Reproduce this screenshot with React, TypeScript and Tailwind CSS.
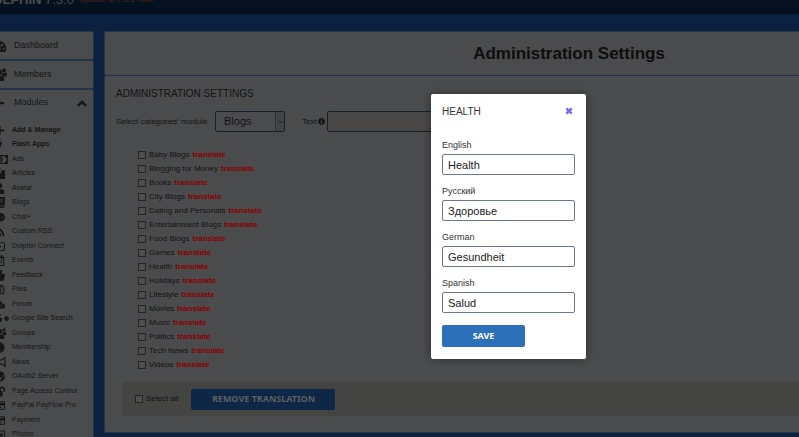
import { useState } from "react";
import type { ComponentType } from "react";
import {
  FaCertificate,
  FaCommentDots,
  FaComments,
  FaGlobeAmericas,
  FaInfoCircle,
  FaLockOpen,
  FaPlus,
  FaRegCalendarAlt,
  FaRegCreditCard,
  FaRegImage,
  FaRegSave,
  FaRss,
  FaThumbsUp,
  FaUser,
} from "react-icons/fa";

interface IconProps {
  className?: string
}

interface ModuleLink {
  label: string
  icon: ComponentType<IconProps>
  bold?: boolean
}

function DashboardIcon({ className }: IconProps) {
  return (
    <svg viewBox="0 0 16 13" className={className} fill="currentColor">
      <path
        fillRule="evenodd"
        d="M8 1a8 8 0 0 0-6.8 12h13.600A8 8 0 0 0 8 1zM3 8a1.100 1.100 0 1 0 0 2.200A1.100 1.100 0 0 0 3 8zm1.500-3.600a1.100 1.100 0 1 0 0 2.200 1.100 1.100 0 0 0 0-2.200zM8 2.600a1.100 1.100 0 1 0 0 2.200 1.100 1.100 0 0 0 0-2.200zm3.500 1.800a1.100 1.100 0 1 0 0 2.200 1.100 1.100 0 0 0 0-2.200zM13 8a1.100 1.100 0 1 0 0 2.200A1.100 1.100 0 0 0 13 8zM9.200 5.500L8 8.500a1.600 1.600 0 1 0 1 .3l1-3z"
      />
    </svg>
  )
}

function GroupIcon({ className }: IconProps) {
  return (
    <svg viewBox="0 0 16 13" className={className} fill="currentColor">
      <circle cx="3" cy="2.200" r="2" />
      <circle cx="13" cy="2.200" r="2" />
      <circle cx="8" cy="4.200" r="3" />
      <path d="M0 7.500C0 5.500.4 4.300 1.400 4.300c.8.700 2 .7 3 .3C4.400 6 5 6.800 5.500 7.300 4 7.300 3.300 8 2.800 8.600H1C.4 8.600 0 8.200 0 7.500zM16 7.500c0-2-.4-3.200-1.400-3.200-.8.700-2 .7-3 .3 0 1.400-.6 2.200-1.100 2.700 1.500 0 2.200.7 2.700 1.300H15c.6 0 1-.4 1-1.100z" />
      <path d="M5.200 7.300c1.700 1.300 3.900 1.300 5.600 0 1.700 0 2.500 1.800 2.500 3.900 0 1.200-.7 1.800-1.800 1.800h-7c-1.100 0-1.800-.6-1.800-1.800 0-2.100.8-3.900 2.500-3.900z" />
    </svg>
  )
}

function MoneyIcon({ className }: IconProps) {
  return (
    <svg viewBox="0 0 16 11" className={className} fill="currentColor">
      <path
        fillRule="evenodd"
        d="M0 1h16v9H0zM3.200 2.200a2 2 0 0 1-2 2v2.600a2 2 0 0 1 2 2h9.600a2 2 0 0 1 2-2V4.200a2 2 0 0 1-2-2z"
      />
      <path fillRule="evenodd" d="M8 2.500c1.700 0 2.700 1.300 2.700 3s-1 3-2.700 3-2.700-1.300-2.700-3 1-3 2.700-3zM7 4.300v.8h.5v1.800H7v.6h2v-.6h-.5V3.800H8z" />
    </svg>
  )
}

function ArticlesIcon({ className }: IconProps) {
  return (
    <svg viewBox="0 0 12 12" className={className} fill="currentColor">
      <path d="M4 0h3v2L4.500 4.500V10H0V3h3.500z" />
      <path d="M8 2.500h4V12H5.300V5.500h2.700z" />
    </svg>
  )
}

function BookIcon({ className }: IconProps) {
  return (
    <svg viewBox="0 0 13 12" className={className} fill="currentColor">
      <path
        fillRule="evenodd"
        d="M4 0h8c.8 0 1.200.6 1 1.300l-2.300 8.200H3c-.7 0-.9.500-.6 1h8.400l1.500-5.500.7.500-1.700 5.700c-.1.500-.5.800-1 .8H2.500C1 12 0 10.800.3 9.500L2.600 1.200C2.800.5 3.300 0 4 0zm.7 2.700l-.2.800h5.200l.2-.8zM4.200 4.600l-.2.800h5.200l.2-.8z"
      />
    </svg>
  )
}

function SignInIcon({ className }: IconProps) {
  return (
    <svg viewBox="0 0 12 12" className={className} fill="currentColor">
      <path d="M0 4.500h3.500V2L8 6l-4.500 4V7.500H0z" />
      <path d="M7 1h2.500A2.500 2.500 0 0 1 12 3.500v5A2.500 2.500 0 0 1 9.500 11H7V9.800h2.300c.8 0 1.500-.6 1.500-1.400V3.600c0-.8-.7-1.400-1.500-1.400H7z" />
    </svg>
  )
}

function GooglePlusIcon({ className }: IconProps) {
  return (
    <svg viewBox="0 0 18 11" className={className} fill="none" stroke="currentColor" strokeWidth="2">
      <path d="M9.300 2.800A4.300 4.300 0 1 0 10.200 6H6M13 5.500h5M15.500 3v5" />
    </svg>
  )
}

function HornIcon({ className }: IconProps) {
  return (
    <svg viewBox="0 0 14 12" className={className} fill="none" stroke="currentColor" strokeWidth="1.300">
      <path d="M1 4h4.500C8.500 4 11 2.500 13 .8v9.400C11 8.500 8.500 7 5.500 7H1zM3 7l1 4.300h2L5.300 7" />
    </svg>
  )
}

function BoltIcon({ className }: IconProps) {
  return (
    <svg viewBox="0 0 6 12" className={className} fill="currentColor">
      <path d="M1.500 0h2.700L2.800 3.700 6 3 2 12l1-6.200L0 6.600z" />
    </svg>
  )
}

const modules: ModuleLink[] = [
  { label: "Add & Manage", icon: FaPlus, bold: true },
  { label: "Flash Apps", icon: BoltIcon, bold: true },
  { label: "Ads", icon: MoneyIcon },
  { label: "Articles", icon: ArticlesIcon },
  { label: "Avatar", icon: FaUser },
  { label: "Blogs", icon: BookIcon },
  { label: "Chat+", icon: FaCommentDots },
  { label: "Custom RSS", icon: FaRss },
  { label: "Dolphin Connect", icon: SignInIcon },
  { label: "Events", icon: FaRegCalendarAlt },
  { label: "Feedback", icon: FaThumbsUp },
  { label: "Files", icon: FaRegSave },
  { label: "Forum", icon: FaComments },
  { label: "Google Site Search", icon: GooglePlusIcon },
  { label: "Groups", icon: GroupIcon },
  { label: "Membership", icon: FaCertificate },
  { label: "News", icon: HornIcon },
  { label: "OAuth2 Server", icon: FaGlobeAmericas },
  { label: "Page Access Control", icon: FaLockOpen },
  { label: "PayPal PayFlow Pro", icon: FaRegCreditCard },
  { label: "Payment", icon: FaRegCreditCard },
  { label: "Photos", icon: FaRegImage },
];

const categories = [
  "Baby Blogs",
  "Blogging for Money",
  "Books",
  "City Blogs",
  "Dating and Personals",
  "Entertainment Blogs",
  "Food Blogs",
  "Games",
  "Health",
  "Holidays",
  "Lifestyle",
  "Movies",
  "Music",
  "Politics",
  "Tech News",
  "Videos",
];

const translations = [
  { lang: "English", value: "Health" },
  { lang: "Русский", value: "Здоровье" },
  { lang: "German", value: "Gesundheit" },
  { lang: "Spanish", value: "Salud" },
];

const card = "rounded-[2px] border border-[#24344a] bg-[#4a4b4c]";
const checkbox = "size-2 shrink-0 appearance-none border border-[#262626] bg-[#4d4d4d] checked:bg-[#12345c]";

function Header() {
  return (
    <header className="flex h-[14px] items-end gap-[6px] border-b border-[#040b14] bg-[#06111f] pb-2">
      <div className="-ml-[17px] text-[13px] leading-[10px] text-[#4c4c4c]">
        <b>DOLPHIN</b> 7.3.0
      </div>
      <a href="#update" className="text-[8px] leading-[10px] text-[#4a2414]">
        Update to 7.3.1 now!
      </a>
    </header>
  )
}

function Sidebar() {
  return (
    <nav className="-ml-[10px] w-[104px] shrink-0 text-[9px] text-[#161616]">
      <a href="#dashboard" className={`${card} flex h-[29px] items-center gap-[7px]`}>
        <DashboardIcon className="h-3 w-4" />
        Dashboard
      </a>
      <a href="#members" className={`${card} flex h-[29px] items-center gap-[7px]`}>
        <GroupIcon className="h-[13px] w-4" />
        Members
      </a>
      <div className={card}>
        <button type="button" className="flex h-[26px] w-full items-center gap-[7px] pr-[6px]">
          <span className="flex w-4 justify-center">
            <FaPlus className="size-3" />
          </span>
          Modules
          <svg viewBox="0 0 10 7" className="ml-auto h-[7px] w-[10px]" fill="none" stroke="currentColor" strokeWidth="2.400">
            <path d="M1 5.800L5 1.800l4 4" />
          </svg>
        </button>
        <ul className="pt-[7px] text-[7px]">
          {modules.map(({ label, icon: Icon, bold }) => (
            <li key={label} className="odd:h-[14px] even:h-[15px]">
              <a href="#module" className={`flex h-full items-center gap-1 whitespace-nowrap ${bold ? "font-bold" : ""}`}>
                <span className="flex w-[17px] shrink-0 justify-center">
                  <Icon className="h-[11px] w-auto shrink-0" />
                </span>
                {label}
              </a>
            </li>
          ))}
        </ul>
      </div>
    </nav>
  )
}

function SettingsPanel() {
  return (
    <main className="-mr-[235px] min-w-0 flex-1 text-[8px] text-[#141414]">
      <h1 className={`${card} flex h-[45px] items-center justify-center text-[17px] font-bold text-[#0e0e0e]`}>
        Administration Settings
      </h1>
      <section className={`${card} -mt-px px-[11px] pt-[11px] pb-4`}>
        <h2 className="text-[10px] leading-[14px]">ADMINISTRATION SETTINGS</h2>

        <div className="mt-[10px] flex items-center">
          <label htmlFor="module" className="w-[99px]">Select categories' module</label>
          <div className="relative w-[70px]">
            <select
              id="module"
              className="block h-[21px] w-full appearance-none rounded-[2px] border border-[#16202c] bg-[#4a4b4c] pl-2 text-[11px]"
            >
              <option>Blogs</option>
            </select>
            <span className="pointer-events-none absolute inset-y-px right-px flex w-[9px] items-center justify-center border-l border-[#2c3138] bg-[#434445]">
              <svg viewBox="0 0 6 4" className="h-1 w-[5px]" fill="none" stroke="currentColor">
                <path d="M1 1l2 2 2-2" />
              </svg>
            </span>
          </div>
          <label htmlFor="text" className="ml-[17px] flex items-center gap-px">
            Text <FaInfoCircle className="size-[7px]" />
          </label>
          <input
            id="text"
            className="ml-[2px] h-[21px] w-[150px] rounded-[2px] border border-[#16202c] bg-[#4a4846] px-[5px] text-[11px]"
          />
        </div>

        <ul className="mt-4 pl-[22px]">
          {categories.map((name) => (
            <li key={name} className="flex h-[14px] items-center">
              <label className="flex items-center gap-[3px]">
                <input type="checkbox" className={checkbox} />
                {name}
              </label>
              <a href="#translate" className="ml-[3px] font-bold text-[#8a0000]">translate</a>
            </li>
          ))}
        </ul>

        <div className="mt-[10px] ml-[6px] flex h-[34px] items-center gap-[13px] bg-[#444443] pl-[13px]">
          <label className="flex items-center gap-[3px]">
            <input type="checkbox" className={checkbox} />
            Select all
          </label>
          <button
            type="button"
            className="h-[21px] w-36 rounded-[2px] bg-[#0e2747] font-['Noto_Sans',sans-serif] text-[9px] font-bold text-[#5c5e60]"
          >
            REMOVE TRANSLATION
          </button>
        </div>
      </section>
    </main>
  )
}

function TranslateDialog({ onClose }: { onClose: () => void }) {
  return (
    <div
      role="dialog"
      aria-labelledby="dialog-title"
      className="absolute top-[94px] left-[431px] w-[155px] rounded-[2px] bg-white px-[11px] pt-[10px] pb-3 text-[#333] shadow-[0_0_8px_rgba(0,0,0,0.4)]"
    >
      <div className="flex h-[14px] items-center justify-between pr-[2px]">
        <h2 id="dialog-title" className="text-[10px]">HEALTH</h2>
        <button type="button" aria-label="Close" onClick={onClose} className="text-[#7b68ee]">
          <svg viewBox="0 0 8 8" className="size-2" fill="none" stroke="currentColor" strokeWidth="2.400">
            <path d="M1.300 1.300l5.400 5.400M6.700 1.300L1.300 6.700" />
          </svg>
        </button>
      </div>
      <form className="mt-[21px]" onSubmit={(e) => e.preventDefault()}>
        {translations.map(({ lang, value }) => (
          <div key={lang} className="mb-[10px]">
            <label htmlFor={lang} className="block pb-[3px] text-[9px] leading-3">{lang}</label>
            <input
              id={lang}
              defaultValue={value}
              className="block h-[21px] w-full rounded-[2px] border border-[#6b7a90] px-[5px] text-[11px] text-[#222]"
            />
          </div>
        ))}
        <button
          type="submit"
          className="mt-3 block h-[22px] w-[83px] rounded-[2px] bg-[#2d70ba] font-['Noto_Sans',sans-serif] text-[9px] font-bold text-white"
        >
          SAVE
        </button>
      </form>
    </div>
  )
}

export default function App() {
  const [open, setOpen] = useState(true);

  return (
    <div className="relative h-screen overflow-hidden bg-[#0c2140] font-['Liberation_Sans',Arial,sans-serif]">
      <Header />
      <div className="mt-[17px] flex items-start gap-[10px]">
        <Sidebar />
        <SettingsPanel />
      </div>
      {open && <TranslateDialog onClose={() => setOpen(false)} />}
    </div>
  )
}
